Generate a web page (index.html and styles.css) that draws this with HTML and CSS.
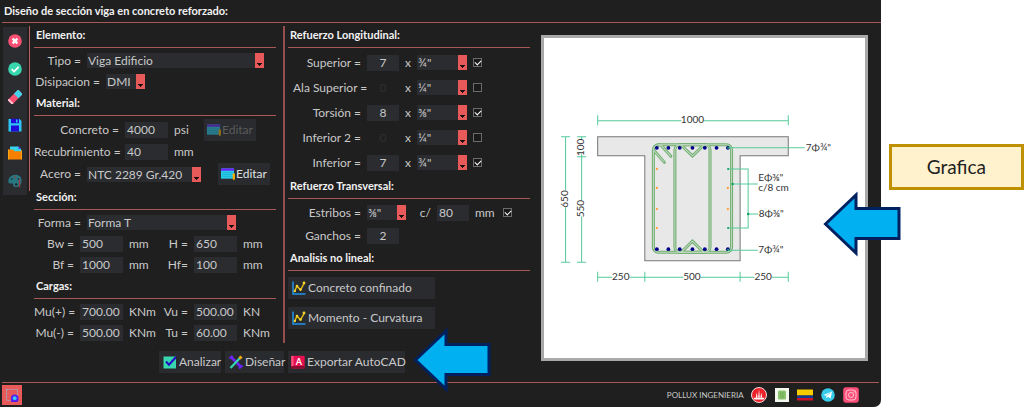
FILE: index.html
```html
<!DOCTYPE html>
<html lang="es">
<head>
<meta charset="utf-8">
<title>Diseño de sección viga</title>
<link rel="stylesheet" href="styles.css">
</head>
<body>
<div class="page">
<div class="app">
  <header class="title"><h1>Diseño de sección viga en concreto reforzado:</h1></header>
  <div class="main">
    <nav class="tools" aria-label="Herramientas">
      <button aria-label="Cerrar"><svg viewBox="0 0 14 14"><circle cx="7" cy="7" r="6.8" fill="#fb5074"/><path d="M4.6 4.6l4.8 4.8M9.4 4.6L4.6 9.4" stroke="#fff" stroke-width="2.2"/></svg></button>
      <button aria-label="Aceptar"><svg viewBox="0 0 14 14"><circle cx="7" cy="7" r="6.8" fill="#38d6ae"/><path d="M3.6 7l2.5 2.5 4.5-4.6" fill="none" stroke="#fff" stroke-width="1.7"/></svg></button>
      <button aria-label="Borrar"><svg viewBox="0 0 14 14"><g transform="rotate(-45 7 7)"><rect x="-.5" y="4" width="15" height="6.4" rx="1" fill="#fb5074"/><rect x="8.500" y="4" width="6" height="6.400" fill="#40d3ec"/><rect x="-.5" y="4" width="2" height="6.400" fill="#ffc3cf"/></g></svg></button>
      <button aria-label="Guardar"><svg viewBox="0 0 14 14"><path d="M.5 1h11L13.500 3v10.500H.5z" fill="#2fc5f5"/><path d="M3 .8h8v4.400H3zM3 7.500h8v6H3z" fill="#2109d6"/><path d="M8 1.500h1.500v3H8z" fill="#2fc5f5"/></svg></button>
      <button aria-label="Abrir"><svg viewBox="0 0 14 14"><path d="M2 .5h8.500L13 3v4H2z" fill="#35d5ed"/><path d="M10.500.5L13 3h-2.500z" fill="#6b24f4"/><path d="M.2 3.500h4.800l1.300 1.700h7.500V13.500H.2z" fill="#f78000"/><path d="M.2 3.500h1v10h-1z M13 4h.8v9.500H13z" fill="#ffb31a"/></svg></button>
      <button aria-label="Colores"><svg viewBox="0 0 14 14"><path d="M7.500.8C3.200.8.3 4 .3 7.200c0 2.300 1.500 2.600 3 2.200 1.600-.4 2 .5 1.900 1.700-.1 1.500 1.300 2.100 2.800 2 3.700-.2 5.800-3 5.600-6.600C13.400 3 11 .8 7.500.8z" fill="#287780"/><circle cx="4" cy="5" r="1" fill="#16444a"/><circle cx="7.200" cy="3.300" r="1" fill="#8d4150"/><circle cx="10.500" cy="5" r="1" fill="#15444a"/><circle cx="8.200" cy="10.500" r="1.200" fill="#1f2226"/><path d="M11.500 5v8.500" stroke="#9b394b" stroke-width="1.300"/></svg></button>
    </nav>
    <div class="work">
      <div class="columns">
        <div class="column left">
          <h2>Elemento:</h2>
          <div class="group">
            <div class="row"><label class="l-mid" for="tipo">Tipo =</label><select id="tipo" class="w-xl"><option>Viga Edificio</option></select></div>
            <div class="row"><label class="l-dis" for="disip">Disipacion =</label><select id="disip" class="w-s"><option>DMI</option></select></div>
          </div>
          <h2>Material:</h2>
          <div class="group tall">
            <div class="row"><label class="l-wide" for="conc">Concreto =</label><input id="conc" value="4000"><span class="unit">psi</span>
              <button class="btn edit" disabled><svg viewBox="0 0 15 14"><path d="M0 1h14v11H0z" fill="#28cbea"/><path d="M0 1h14v2.500H0z" fill="#6b24f4"/><path d="M1.500 5.500h11M1.500 7.500h11M1.500 9.500h11" stroke="#169eb9" stroke-width=".5"/><path d="M12.500 6.500H15V12l-1.200 2-1.300-2z" fill="#f9ac00"/></svg>Editar</button></div>
            <div class="row"><label class="l-wide" for="recub">Recubrimiento =</label><input id="recub" value="40"><span class="unit">mm</span></div>
            <div class="row"><label class="l-mid" for="acero">Acero =</label><select id="acero" class="w-l"><option>NTC 2289 Gr.420</option></select>
              <button class="btn edit steel"><svg viewBox="0 0 15 14"><path d="M0 1h14v11H0z" fill="#28cbea"/><path d="M0 1h14v2.500H0z" fill="#6b24f4"/><path d="M1.500 5.500h11M1.500 7.500h11M1.500 9.500h11" stroke="#169eb9" stroke-width=".5"/><path d="M12.500 6.500H15V12l-1.200 2-1.300-2z" fill="#f9ac00"/></svg>Editar</button></div>
          </div>
          <h2>Sección:</h2>
          <div class="group">
            <div class="row"><label class="l-mid" for="forma">Forma =</label><select id="forma" class="w-f"><option>Forma T</option></select></div>
            <div class="row"><label class="l-nar" for="bw">Bw =</label><input id="bw" value="500"><span class="unit">mm</span><label class="l-two" for="h">H =</label><input id="h" value="650"><span class="unit">mm</span></div>
            <div class="row"><label class="l-nar" for="bf">Bf =</label><input id="bf" value="1000"><span class="unit">mm</span><label class="l-two" for="hf">Hf=</label><input id="hf" value="100"><span class="unit">mm</span></div>
          </div>
          <h2>Cargas:</h2>
          <div class="group">
            <div class="row"><label class="l-nar" for="mup">Mu(+) =</label><input id="mup" value="700.00"><span class="unit">KNm</span><label class="l-two" for="vu">Vu =</label><input id="vu" value="500.00"><span class="unit">KN</span></div>
            <div class="row"><label class="l-nar" for="mun">Mu(-) =</label><input id="mun" value="500.00"><span class="unit">KNm</span><label class="l-two" for="tu">Tu =</label><input id="tu" value="60.00"><span class="unit">KNm</span></div>
          </div>
        </div>
        <div class="column right">
          <h2>Refuerzo Longitudinal:</h2>
          <div class="group bars">
            <div class="row"><label class="l-bar" for="sup">Superior =</label><input id="sup" class="num" value="7"><span class="x">x</span><select class="w-b" aria-label="Diámetro superior"><option>¾"</option></select><input type="checkbox" aria-label="Usar superior" checked></div>
            <div class="row"><label class="l-bar" for="ala">Ala Superior =</label><input id="ala" class="num" value="0" disabled><span class="x">x</span><select class="w-b" aria-label="Diámetro ala superior"><option>¼"</option></select><input type="checkbox" aria-label="Usar ala superior"></div>
            <div class="row"><label class="l-bar" for="tor">Torsión =</label><input id="tor" class="num" value="8"><span class="x">x</span><select class="w-b" aria-label="Diámetro torsión"><option>⅜"</option></select><input type="checkbox" aria-label="Usar torsión" checked></div>
            <div class="row"><label class="l-bar" for="in2">Inferior 2 =</label><input id="in2" class="num" value="0" disabled><span class="x">x</span><select class="w-b" aria-label="Diámetro inferior 2"><option>¼"</option></select><input type="checkbox" aria-label="Usar inferior 2"></div>
            <div class="row"><label class="l-bar" for="inf">Inferior =</label><input id="inf" class="num" value="7"><span class="x">x</span><select class="w-b" aria-label="Diámetro inferior"><option>¾"</option></select><input type="checkbox" aria-label="Usar inferior" checked></div>
          </div>
          <h2>Refuerzo Transversal:</h2>
          <div class="group ties">
            <div class="row"><label class="l-bar" for="est">Estribos =</label><select id="est" class="w-s"><option>⅜"</option></select><label class="l-sep" for="sep">c/</label><input id="sep" class="num start" value="80"><span class="unit short">mm</span><input type="checkbox" aria-label="Usar estribos" checked></div>
            <div class="row"><label class="l-bar" for="gan">Ganchos =</label><input id="gan" class="num" value="2"></div>
          </div>
          <h2>Analisis no lineal:</h2>
          <div class="curves">
            <button class="btn"><svg viewBox="0 0 14 14"><path d="M1 .5V13h12.500" fill="none" stroke="#1f94ea" stroke-width="1.500"/><path d="M2.500 10.500L5 5l3.500 4L12 2.500" fill="none" stroke="#e2bd16" stroke-width="1.500"/><g fill="#f4d62f"><circle cx="2.800" cy="10" r="1.200"/><circle cx="5" cy="5" r="1.300"/><circle cx="8.500" cy="8.500" r="1.300"/><circle cx="12" cy="2" r="1.400"/></g></svg>Concreto confinado</button>
            <button class="btn"><svg viewBox="0 0 14 14"><path d="M1 .5V13h12.500" fill="none" stroke="#1f94ea" stroke-width="1.500"/><path d="M2.500 10.500L5 5l3.500 4L12 2.500" fill="none" stroke="#e2bd16" stroke-width="1.500"/><g fill="#f4d62f"><circle cx="2.800" cy="10" r="1.200"/><circle cx="5" cy="5" r="1.300"/><circle cx="8.500" cy="8.500" r="1.300"/><circle cx="12" cy="2" r="1.400"/></g></svg>Momento - Curvatura</button>
          </div>
        </div>
      </div>
      <div class="actions">
        <button class="btn w-an"><svg viewBox="0 0 14 14"><path d="M.5 1.500h12.500v12H.5z" fill="#38d6ae"/><path d="M3 6.500l3 3.200L13 2" fill="none" stroke="#2109c6" stroke-width="2"/></svg>Analizar</button>
        <button class="btn w-di"><svg viewBox="0 0 14 14"><path d="M2 2l10 10" stroke="#6b24f4" stroke-width="2.800"/><path d="M.5 3.500L3.500.8M10 13.500l3.500-3" stroke="#6b24f4" stroke-width="2"/><path d="M1.500 13L11 3" stroke="#38d6ae" stroke-width="2.200"/><path d="M10.500 3.500l2-2" stroke="#f9ac00" stroke-width="3"/></svg>Diseñar</button>
        <button class="btn w-ex"><svg viewBox="0 0 14 14"><rect x=".3" y=".8" width="13.400" height="12.700" rx="1" fill="#e51050"/><path d="M.3 11h13.400v2.500H.3z" fill="#8c0d32"/><path d="M.3 1h2.200v10H.3z" fill="#ff527e"/><text x="8" y="9.500" font-size="9" font-weight="700" text-anchor="middle" fill="#fff">A</text></svg>Exportar AutoCAD</button>
      </div>
    </div>
    <figure class="plot">
      <svg viewBox="544 38 320 319" role="img" aria-label="Sección transversal de la viga">
        <path d="M597.500 136.500h190v19h-48v104.500h-95v-104.500h-47z" fill="#e8e8e8" stroke="#777"/>
        <g class="tie-out">
          <rect x="653" y="144.500" width="78" height="107" rx="5"/><rect x="674.500" y="144.500" width="35" height="107" rx="5"/>
          <path d="M653.500 150l10.500 12M658 144.500q3 0 5 3l7.500 8.500M680 145q2 0 4 3l8 7.500 8-7.500q2-3 4-3M680 251.500q2 0 4-3l8-8 8 8q2 3 4 3"/>
        </g>
        <g class="tie-in">
          <rect x="653" y="144.500" width="78" height="107" rx="5"/><rect x="674.500" y="144.500" width="35" height="107" rx="5"/>
          <path d="M653.500 150l10.500 12M658 144.500q3 0 5 3l7.500 8.500M680 145q2 0 4 3l8 7.500 8-7.500q2-3 4-3M680 251.500q2 0 4-3l8-8 8 8q2 3 4 3"/>
        </g>
        <g fill="#00008b">
          <circle cx="656.500" cy="147.500" r="1.900"/><circle cx="668" cy="147.500" r="1.900"/><circle cx="679.300" cy="147.500" r="1.900"/><circle cx="692" cy="147.500" r="1.900"/><circle cx="704.300" cy="147.500" r="1.900"/><circle cx="716" cy="147.500" r="1.900"/><circle cx="727.300" cy="147.500" r="1.900"/>
          <circle cx="656.500" cy="248.500" r="1.900"/><circle cx="668" cy="248.500" r="1.900"/><circle cx="679.300" cy="248.500" r="1.900"/><circle cx="692" cy="248.500" r="1.900"/><circle cx="704.300" cy="248.500" r="1.900"/><circle cx="716" cy="248.500" r="1.900"/><circle cx="727.300" cy="248.500" r="1.900"/>
        </g>
        <g fill="#ff9a2e">
          <circle cx="656.500" cy="168.500" r="1.100"/><circle cx="656.500" cy="187.500" r="1.100"/><circle cx="656.500" cy="208.500" r="1.100"/><circle cx="656.500" cy="227.500" r="1.100"/>
          <circle cx="727.300" cy="187.500" r="1.100"/><circle cx="727.300" cy="208.500" r="1.100"/>
        </g>
        <g class="dim">
          <path d="M597.500 120.500H681M703 120.500h84.500M597.500 115v10M787.500 115v10"/>
          <path d="M565.500 137v53M565.500 207v54M561 136.500h9M561 261.500h9"/>
          <path d="M581.500 137v3M581.500 154v46M581.500 216v45M577 136.500h9M577 156.500h9M577 261.500h9"/>
          <path d="M597.500 276.500H612M629 276.500h54M700 276.500h54M771 276.500h16.500M597.500 271v10M644.500 271v10M739.500 271v10M787.500 271v10"/>
          <path d="M727.500 147.500H804M727.500 249.500H757M727.500 168.500h20v59h-20M747.500 213.500h10M732 183.500h25"/>
        </g>
        <g fill="#0ba060"><circle cx="727.500" cy="147.500" r="1"/><circle cx="727.500" cy="168.500" r="1"/><circle cx="727.500" cy="227.500" r="1"/><circle cx="727.500" cy="249" r="1"/><circle cx="747.500" cy="213.500" r="1.200"/><circle cx="732" cy="183.500" r="1.200"/></g>
        <g class="note mid">
          <text x="692" y="123">1000</text><text x="620.500" y="279">250</text><text x="691.500" y="279">500</text><text x="762.500" y="279">250</text>
          <text transform="translate(568 198.500) rotate(-90)">650</text><text transform="translate(584 208) rotate(-90)">550</text><text transform="translate(584 147) rotate(-90)">100</text>
        </g>
        <g class="note">
          <text x="805" y="151">7Φ¾"</text><text x="757.500" y="181">EΦ⅜"</text><text x="757.500" y="191">c/8 cm</text><text x="758" y="216">8Φ⅜"</text><text x="757.500" y="252">7Φ¾"</text>
        </g>
      </svg>
    </figure>
  </div>
  <footer class="foot">
    <button class="select-tool" aria-label="Seleccionar"><svg viewBox="0 0 20 20"><rect x="4.500" y="4.500" width="11" height="11" fill="none" stroke="#a3a3b0" stroke-width="1.200" stroke-dasharray="2 1"/><path d="M9 17v-4q0-3.500 3.700-3.500T16.500 13v2q0 2-2 2z" fill="#5a1df0"/><circle cx="12.700" cy="13.200" r="1.900" fill="#2fd3f2"/></svg></button>
    <span class="brand">POLLUX INGENIERIA</span>
    <a href="#" aria-label="Pollux"><svg viewBox="0 0 16 16"><circle cx="8" cy="8" r="7.500" fill="#ee2028" stroke="#f6dfe0"/><path d="M7.200 10.500L8 2l.8 8.500zM4.800 10.500l.9-5 .9 5zM9.400 10.500l.9-5 .9 5zM2.500 10.800h11l-1 1.600h-9z" fill="#fff"/></svg></a>
    <a href="#" aria-label="Documentos"><svg viewBox="0 0 16 16"><path d="M1 1h14v14H1z" fill="#f3f8ef"/><rect x="4" y="3.500" width="8" height="9" rx="1.500" fill="#8bc26c"/><path d="M6 6h4M6 8h4M6 10h4" stroke="#68a850" stroke-width=".8"/></svg></a>
    <a href="#" aria-label="Colombia"><svg viewBox="0 0 16 16"><path d="M0 2.500h16v6H0z" fill="#f9cc00"/><path d="M0 8.500h16v3H0z" fill="#123a91"/><path d="M0 11h16v2.500H0z" fill="#cb142b"/></svg></a>
    <a href="#" aria-label="Telegram"><svg viewBox="0 0 16 16"><circle cx="8" cy="8" r="6.800" fill="#37cbe9"/><path d="M3.500 8l8.500-3.500-1.300 7-2.700-1.800-1.500 1.500-.5-2.500z" fill="#fff"/><path d="M6 8.800l4.500-3" stroke="#37cbe9" stroke-width=".6"/></svg></a>
    <a href="#" aria-label="Instagram"><svg viewBox="0 0 16 16"><rect x=".2" y=".2" width="15.600" height="15.600" rx="3" fill="#fb4f77"/><rect x="3" y="3" width="10" height="10" rx="3" fill="none" stroke="#ffc4d0"/><circle cx="8" cy="8" r="2.500" fill="none" stroke="#ffc4d0"/><circle cx="11" cy="5" r=".7" fill="#ffc4d0"/></svg></a>
  </footer>
</div>
<aside class="notes"><p class="callout">Grafica</p></aside>
<svg class="arrow to-plot" viewBox="0 0 79 66" aria-hidden="true"><path d="M2.500 33L33 4v13.500h43v30H33V62z"/></svg>
<svg class="arrow to-export" viewBox="0 0 79 66" aria-hidden="true"><path d="M2.500 33L33 4v13.500h43v30H33V62z"/></svg>
</div>
</body>
</html>
```

FILE: styles.css
```css
* { box-sizing: border-box; }
body { margin: 0; background: #fff; color: #c9c9c9; font: 12px/16px Lato, "Open Sans", sans-serif; }
h1, h2, p, figure { margin: 0; }
button, input, select { font: inherit; color: inherit; border: 0; border-radius: 0; padding: 0; margin: 0; background: none; }
svg { display: block; }

.page { position: relative; display: flex; min-height: 100vh; }
.app { flex: 0 0 86%; display: flex; flex-direction: column; background: #1f1f1f; border-bottom-right-radius: 7px; }
.title { padding: 2px 4px 3px 2px; margin-left: 2px; border-bottom: 1px solid #a95858; }
h1 { font-size: 11px; line-height: 17px; font-weight: 700; color: #f2f2f2; }
.main { flex: 1; display: flex; align-items: flex-start; padding: 1px 13px 0 3px; }

.tools { display: flex; flex-direction: column; width: 24px; margin-top: 3px; background: #2a2c30; }
.tools button { display: grid; place-items: center; height: 28px; }
.tools svg { width: 14px; height: 14px; }

.work { flex: 1 1 auto; }
.columns { display: flex; border-left: 1px solid; margin-left: 2px; border-image: linear-gradient(#0000 3px, #b86060 3px, #b86060 167px, #0000 167px) 1; }
.left { width: 253px; padding-left: 4px; }
.right { flex: 1; padding-left: 8px; border-left: 2px solid; border-image: linear-gradient(#0000 3px, #944e4e 3px) 1; }
h2 { width: 242px; font-size: 11px; line-height: 22px; font-weight: 700; color: #f2f2f2; padding: 0 2px 1px; border-bottom: 1px solid #a95858; }
.right h2 { margin-left: -5px; }

.group { padding-top: 2px; }
.row { display: flex; align-items: center; gap: 6px; height: 21px; white-space: nowrap; }
.tall { padding: 3px 0 1px; }
.tall .row { height: 22px; }
.bars .row { height: 25px; }
.ties .row { height: 23px; }
.row label { text-align: right; flex: none; }
.l-nar { width: 40px; }
.l-mid { width: 47px; }
.l-dis { width: 66px; }
.l-wide { width: 85px; }
.l-two { width: 26px; }
.l-bar { width: 68px; }
.row .l-sep { width: 19px; }

input { width: 43px; height: 16px; padding: 0 2px; background: #2a2c30; }
input.num { width: 32px; text-align: center; }
input.start { text-align: left; }
input:disabled { background: none; color: #303030; }
.unit { width: 27px; }
.short { width: 22px; }
.x { width: 6px; text-align: center; }
select { appearance: none; height: 15px; padding: 0 10px 0 1px;
  background: conic-gradient(from -45deg at 50% 100%, #16100f 90deg, #0000 0) right 2px bottom 2px / 5px 3px no-repeat,
    linear-gradient(#e85a5a, #e85a5a) right / 9px 100% no-repeat, #2a2c30; }
.w-s { width: 39px; }
.w-b { width: 50px; }
.w-l { width: 114px; }
.w-f { width: 149px; }
.w-xl { width: 177px; }
input[type=checkbox] { appearance: none; width: 9px; height: 9px; border: 1px solid #6b6b6b; display: grid; place-items: center; background: #1a1a1a; padding: 0; }
input[type=checkbox]:checked::after { content: ""; width: 5px; height: 3px; margin-bottom: 1px; border: solid #fff; border-width: 0 0 1px 1px; transform: rotate(-45deg); }

.btn { display: flex; align-items: center; gap: 2px; height: 22px; padding: 0 4px; background: #292b2f; font-size: 12px; white-space: nowrap; }
.btn svg { width: 14px; height: 14px; flex: none; }
.edit { width: 52px; gap: 1px; padding: 0 3px; color: #e0e0e0; margin-left: -3px; }
.steel { margin-left: 11px; }
.edit:disabled { color: #5b5b5b; }
.edit:disabled svg { opacity: .5; }
.curves { display: flex; flex-direction: column; gap: 8px; width: 147px; padding-top: 6px; margin-left: -5px; }
.actions { display: flex; gap: 4px; margin: 8px 0 0 132px; }
.w-an { width: 62px; }
.w-di { width: 59px; }
.w-ex { width: 117px; padding: 0 3px; }

.plot { flex: 0 0 327px; margin-top: 11px; border: 3px solid #a9a9a9; background: #fff; }
.plot svg { width: 100%; }
.tie-out { fill: none; stroke: #6fae6f; stroke-width: 3; stroke-linecap: round; }
.tie-in { fill: none; stroke: #c4d9c4; stroke-width: 1; }
.dim { fill: none; stroke: #55c99a; stroke-width: 1; }
.note { fill: #333; font-size: 10px; }
.mid { text-anchor: middle; }

.foot { display: flex; align-items: center; gap: 7px; height: 25px; margin: 0 2px; padding-right: 20px; border-top: 1px solid #a95858; }
.foot a svg { width: 16px; height: 16px; }
.select-tool { width: 20px; height: 20px; background: #e85a5a; margin-right: auto; }
.brand { font-size: 8px; }

.notes { flex: 1; padding: 144px 0 0 8px; }
.callout { border: 3px solid #bf9000; background: #fff2cc; color: #222; font-size: 19px; line-height: 40px; text-align: center; }
.arrow { position: absolute; width: 79px; height: 66px; fill: #00b0f0; stroke: #002060; stroke-width: 3; }
.to-plot { left: 823px; top: 191px; }
.to-export { left: 413px; top: 327px; }
```
